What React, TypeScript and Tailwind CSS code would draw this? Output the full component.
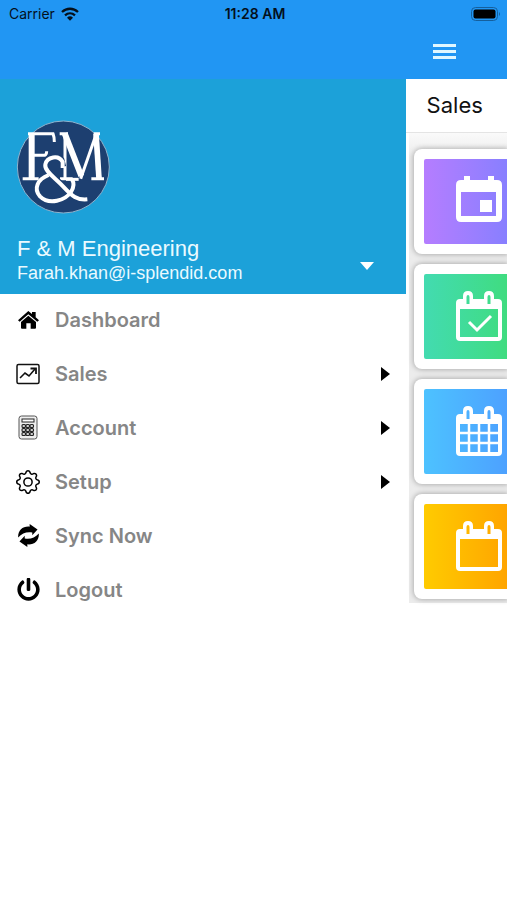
import type { ReactNode } from "react";
import { FaPowerOff } from "react-icons/fa";
import { BsGear } from "react-icons/bs";

function WifiIcon() {
  return (
    <svg viewBox="0 0 54 42" className="h-[14px] w-[18px]" fill="none" stroke="#04101c" strokeWidth="7" aria-hidden="true">
      <path d="M3 15C17 2 37 2 51 15" />
      <path d="M12 25C21 17 33 17 42 25" />
      <path d="M18 32Q27 24 36 32L27 41Z" fill="#04101c" stroke="none" />
    </svg>
  );
}

function BatteryIcon() {
  return (
    <svg viewBox="0 0 30 14" className="h-[14px] w-[30px]" aria-hidden="true">
      <rect x="0.5" y="0.5" width="26" height="13" rx="4" fill="none" stroke="#155f9c" />
      <rect x="2.5" y="2.5" width="22" height="9" rx="2" fill="#000" />
      <path d="M28 5Q30 7 28 9Z" fill="#155f9c" />
    </svg>
  );
}

function Logo() {
  return (
    <svg viewBox="6 6 282 282" className="size-[94px]" role="img" aria-label="F & M logo">
      <circle cx="148" cy="147" r="138" fill="#1d3f70" stroke="#8fb4cf" strokeWidth="3" />
      <g fill="none" stroke="#fff" strokeWidth="9">
        <path d="M42 47H117Q121 57 121 72M26 182H74M58 112H92Q98 110 98 100" />
        <path d="M53 46V182" strokeWidth="18" />
        <path d="M137 47H162M153 46V182M138 182H176M240 47H258M232 182H270" />
        <path d="M152 46L202 174" strokeWidth="18" />
        <path d="M200 182L246 50" strokeWidth="9" />
        <path d="M246 46L255 182" strokeWidth="17" />
        <path
          d="M147 146L142 126C126 109 99 118 94 139C90 159 121 177 147 205C175 235 189 247 220 244"
          stroke="#1d3f70"
          strokeWidth="19"
        />
        <path d="M146 150V132C134 109 99 116 94 139C90 159 121 177 147 205C175 235 189 247 220 244" strokeWidth="12" />
        <path d="M104 171C70 184 58 212 78 235C106 263 154 247 171 222C181 207 181 196 174 184" strokeWidth="12" />
        <path d="M156 184H194" />
      </g>
    </svg>
  );
}

function HomeIcon() {
  return (
    <svg viewBox="0 0 63 54" className="h-[18px] w-[21px]" aria-hidden="true">
      <path d="M31 0L42 9V3H53V19L63 28L58 32L31 10L5 32L0 28Z" />
      <path d="M31 14L54 33V50Q54 53 51 53H38V37H25V53H12Q9 53 9 50V33Z" />
    </svg>
  );
}

function ChartIcon() {
  return (
    <svg viewBox="0 0 24 22" className="h-[22px] w-6" fill="none" stroke="#111" aria-hidden="true">
      <rect x="1" y="1.500" width="22" height="19" rx="1.500" strokeWidth="1.500" />
      <path d="M4 15L9 10L13 13L19 6" strokeWidth="1.600" />
      <path d="M14.500 5.500H20V11" strokeWidth="1.800" />
    </svg>
  );
}

function CalculatorIcon() {
  return (
    <svg viewBox="0 0 20 25" className="h-[25px] w-5" fill="none" stroke="#222" aria-hidden="true">
      <rect x="1" y="1" width="18" height="23" rx="2.500" fill="#eee" stroke="#555" />
      <rect x="4" y="4" width="12" height="3" fill="#fff" />
      {[9, 13, 17].map((y) =>
        [4, 8, 12].map((x) => (
          <rect key={x + "-" + y} x={x} y={y + 0.5} width="3.500" height="3" rx="1" fill="#ccc" strokeWidth="1.100" />
        )),
      )}
    </svg>
  );
}

function SyncIcon() {
  const arrow = "M0 41C-1 19 14 6 35 8V0L59 17L43 34V26C26 23 12 28 0 41Z";
  return (
    <svg viewBox="0 0 63 70" className="h-[23px] w-[21px]" aria-hidden="true">
      <path d={arrow} />
      <path d={arrow} transform="rotate(180 31.500 35)" />
    </svg>
  );
}

function EventIcon() {
  return (
    <svg viewBox="0 0 46 51" className="h-[51px] w-[46px]" fill="#fff" aria-hidden="true">
      <path
        fillRule="evenodd"
        d="M8 0h6v4h18V0h6v4h3q5 0 5 5v32q0 5-5 5H5q-5 0-5-5V9q0-5 5-5h3zM5 16v24h35V16z"
      />
      <rect x="24" y="24" width="12" height="12" />
    </svg>
  );
}

function RingCalendar({ children }: { children?: ReactNode }) {
  return (
    <svg viewBox="0 0 46 51" className="h-[51px] w-[46px]" fill="none" stroke="#fff" aria-hidden="true">
      <path
        fill="#fff"
        stroke="none"
        fillRule="evenodd"
        d="M4 8H7V5Q7 0 12 0Q17 0 17 5V8H28V5Q28 0 33 0Q38 0 38 5V8H42Q46 8 46 12V46Q46 50 42 50H4Q0 50 0 46V12Q0 8 4 8ZM10.500 6V13H13.500V6Q13.500 4 12 4Q10.500 4 10.500 6ZM31.500 6V13H34.500V6Q34.500 4 33 4Q31.500 4 31.500 6ZM4 18V46H42V18Z"
      />
      {children}
    </svg>
  );
}

const menu = [
  { label: "Dashboard", icon: <HomeIcon />, nested: false },
  { label: "Sales", icon: <ChartIcon />, nested: true },
  { label: "Account", icon: <CalculatorIcon />, nested: true },
  { label: "Setup", icon: <BsGear className="size-6" />, nested: true },
  { label: "Sync Now", icon: <SyncIcon />, nested: false },
  { label: "Logout", icon: <FaPowerOff className="size-[23px]" />, nested: false },
];

const tiles = [
  { label: "Event", color: "from-[#b57dff] to-[#887fff]", icon: <EventIcon /> },
  {
    label: "Completed",
    color: "from-[#43dbb0] to-[#40dc80]",
    icon: (
      <RingCalendar>
        <path d="M13 31L21 39L35 25" strokeWidth="3" />
      </RingCalendar>
    ),
  },
  {
    label: "Schedule",
    color: "from-[#4dc2ff] to-[#4da1ff]",
    icon: (
      <RingCalendar>
        <path d="M13 18V47M23 18V47M33 18V47M3 27H43M3 37H43" strokeWidth="2.500" />
      </RingCalendar>
    ),
  },
  { label: "Calendar", color: "from-[#ffcb00] to-[#ffa500]", icon: <RingCalendar /> },
];

export default function App() {
  return (
    <div className="flex min-h-screen flex-col overflow-hidden bg-white font-['Inter',sans-serif]">
      <header className="bg-[#2196f3]">
        <div className="grid h-7 grid-cols-3 items-center pr-1.5 pl-[9px] text-sm text-[#04101c]">
          <div className="flex items-center gap-1.5">
            <span>Carrier</span>
            <WifiIcon />
          </div>
          <span className="text-center font-semibold">11:28 AM</span>
          <div className="flex justify-end">
            <BatteryIcon />
          </div>
        </div>
        <div className="flex h-[51px] items-center justify-end pr-[51px] pb-1">
          <button type="button" aria-label="Toggle menu" className="flex flex-col gap-[3px]">
            <span className="h-[3px] w-[23px] bg-[#e0f7ff]" />
            <span className="h-[3px] w-[23px] bg-[#e0f7ff]" />
            <span className="h-[3px] w-[23px] bg-[#e0f7ff]" />
          </button>
        </div>
      </header>

      <div className="flex flex-1">
        <aside className="w-4/5 shrink-0">
          <div className="flex h-[215px] flex-col justify-between bg-[#1ca1d9] pt-[41px] pr-4 pb-[9px] pl-4 text-[#eafaff]">
            <Logo />
            <div className="flex items-center justify-between pr-4 pl-px font-['Liberation_Sans',sans-serif]">
              <div>
                <p className="text-[22px] leading-6">F &amp; M Engineering</p>
                <p className="text-lg leading-6">Farah.khan@i-splendid.com</p>
              </div>
              <button type="button" aria-label="Switch account" className="pt-2.5">
                <svg viewBox="0 0 14 8" className="h-2 w-[14px]" fill="#fff" aria-hidden="true">
                  <path d="M0 0H14L7 8Z" />
                </svg>
              </button>
            </div>
          </div>
          <nav>
            {menu.map((item) => (
              <button key={item.label} type="button" className="flex h-[54px] w-full items-center pr-4 pb-0.5 pl-4 text-left">
                <span className="flex w-6 justify-center pb-px text-black">{item.icon}</span>
                <span className="ml-[15px] flex-1 text-xl font-semibold text-[#868686]">{item.label}</span>
                {item.nested && (
                  <svg viewBox="0 0 9 14" className="h-3.5 w-[9px]" aria-hidden="true">
                    <path d="M0 0L9 7L0 14Z" />
                  </svg>
                )}
              </button>
            ))}
          </nav>
        </aside>

        <main className="min-w-0 flex-1">
          <h1 className="h-[54px] border-b border-[#e4e4e4] pl-[21px] text-[22px] leading-[53px] text-[#111]">Sales</h1>
          <div className="ml-[3px] flex flex-col gap-2.5 bg-linear-to-b from-[#fafafa] to-[#ececec] to-5% pt-4 pb-1 pl-[5px]">
            {tiles.map((tile) => (
              <button
                key={tile.label}
                type="button"
                aria-label={tile.label}
                className="h-[105px] w-full rounded-l-lg bg-white py-2.5 pl-2.5 shadow-[0_0_5px_1px_rgba(0,0,0,0.25)]"
              >
                <span className={"flex h-[85px] items-center rounded-l-xs bg-linear-to-r pl-8 " + tile.color}>{tile.icon}</span>
              </button>
            ))}
          </div>
        </main>
      </div>
    </div>
  );
}
